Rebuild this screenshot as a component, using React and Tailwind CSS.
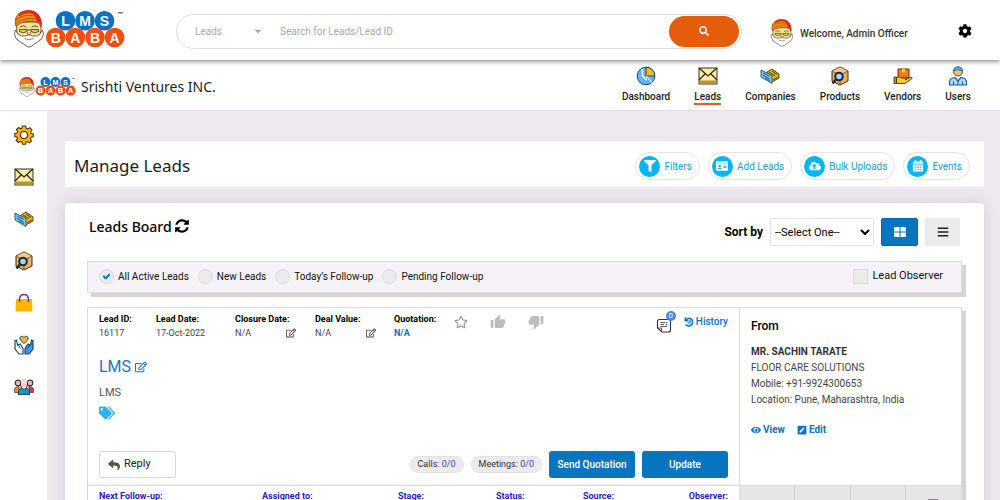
import React from "react";
import {
  FaSearch,
  FaCog,
  FaFilter,
  FaIdCard,
  FaCloudUploadAlt,
  FaRegEdit,
  FaTags,
  FaReply,
  FaEye,
  FaBars,
  FaCaretDown,
  FaRegStar,
  FaCheck,
  FaWhatsapp,
  FaSkype,
  FaPenSquare,
} from "react-icons/fa";
import { MdThumbUp, MdThumbDown } from "react-icons/md";

const BabaFace = ({ className }) => (
  <svg viewBox="0 0 30 38" className={className} aria-hidden="true">
    <path d="M3 12Q2 22 4 26L15 31L26 26Q28 20 26.500 12Z" fill="#f6e296" stroke="#3a3520" strokeWidth=".8" />
    <path d="M1.500 20Q-.5 24 1.500 27Q2 30 5 30.500Q6 33 9 33.500Q12 36.500 15 37.200Q18 36.500 21 33.500Q24 33 25 30.500Q28 30 28.500 27Q30.500 24 28.500 20Q27 24.500 22.500 26Q18.500 26.500 15 24.800Q11.500 26.500 7.500 26Q3 24.500 1.500 20Z" fill="#fff" stroke="#555" strokeWidth=".9" />
    <path d="M2 16.500C-.5 10 3 2 11 .8C20 -.8 28 4 27.500 16.500C24 11.500 20 11 15 11.500C10 12 6 12.500 2 16.500Z" fill="#f08c14" stroke="#7a2b08" strokeWidth=".7" />
    <path d="M12 .8C21 -.5 28 4 27.500 16C26 13 24.500 12 22.500 11.500C23 7 19 2.500 12 .8Z" fill="#e2221c" />
    <path d="M4.500 5Q8 1 13 1Q17 1.500 18.500 3.500Q11 2 5 6.500Z" fill="#d92a1a" />
    <path d="M2 10Q10 3.500 21 6M2 13.500Q11 6.500 22.500 9" stroke="#b9480a" strokeWidth=".8" fill="none" />
    <path d="M6 17Q9 14.800 12.500 17M17.500 17Q21 14.800 24 17" stroke="#4a4430" strokeWidth=".9" fill="none" />
    <path d="M5.500 19.500H13V21.500Q9 24 5.500 21.500ZM17 19.500H24.500V21.500Q21 24 17 21.500ZM13 20H17" fill="#e2c96a" stroke="#333" strokeWidth=".8" />
    <path d="M13.800 22Q12.500 24.500 15 24.800Q17.500 24.500 16.200 22" fill="#f6e296" stroke="#6f5a20" strokeWidth=".8" />
    <path d="M10.500 28.500Q15 31 19.500 28.500" stroke="#777" strokeWidth=".9" fill="none" />
  </svg>
);

const LogoWords = ({ className }) => (
  <svg viewBox="0 0 80 37" className={className} role="img" aria-label="LMS BABA">
    <g fontFamily="Liberation Sans, Arial, sans-serif" fontWeight="700" fontSize="14" fill="#fff" textAnchor="middle">
      {["L", "M", "S"].map((c, i) => (
        <g key={i}>
          <circle cx={19.500 + i * 19.500} cy="9.800" r="9.800" fill="#0a72c0" />
          <text x={19.500 + i * 19.500} y="14.800">{c}</text>
        </g>
      ))}
      {["B", "A", "B", "A"].map((c, i) => (
        <g key={i}>
          <circle cx={9.800 + i * 19.600} cy="26.500" r="9.800" fill="#f0500f" />
          <text x={9.800 + i * 19.600} y="31.500">{c}</text>
        </g>
      ))}
    </g>
    <text x="71" y="5" fontSize="6" fontWeight="700" fontFamily="Liberation Sans, Arial, sans-serif" fill="#222">™</text>
  </svg>
);

const PieIcon = () => (
  <svg viewBox="0 0 20 20" className="size-5">
    <circle cx="10" cy="10" r="8.800" fill="#62b5ef" stroke="#164b7c" />
    <path d="M10 10V1.200A8.800 8.800 0 0 1 18.800 10Z" fill="#ffb90f" stroke="#164b7c" />
    <path d="M10 10L16 16.500" stroke="#cfeafd" strokeWidth="1.200" />
    <path d="M6.500 3V10L10.500 14" stroke="#fff" strokeWidth="1.500" fill="none" />
  </svg>
);
const MailIcon = () => (
  <svg viewBox="0 0 20 20" className="size-5">
    <rect x="1" y="2" width="18" height="16" fill="#fdeb9d" stroke="#333" />
    <path d="M1.500 14.500H18.500V17.500H1.500Z" fill="#b9962a" />
    <path d="M1 2L10 10L19 2M1 14L7 8M19 14L13 8" fill="none" stroke="#222" strokeWidth="1.200" />
  </svg>
);
const CompaniesIcon = () => (
  <svg viewBox="0 0 20 20" className="size-5">
    <path d="M7 6L12 3L19 8V12L12 16L7 12Z" fill="#e8b81e" stroke="#4a3b10" strokeWidth=".9" />
    <path d="M9 6L15 10M12 5L17 8.500M13 14L18 11" stroke="#6b530f" strokeWidth="1.100" />
    <path d="M1 4L12 9.500V17.500L1 11Z" fill="#79c3ee" stroke="#24526e" strokeWidth=".9" />
    <path d="M3 7L9.500 10.300M3 9.300L9.500 12.800M5 12L10 14.700" stroke="#24526e" strokeWidth=".9" />
  </svg>
);
const BoxIcon = () => (
  <svg viewBox="0 0 20 20" className="size-5">
    <path d="M10 1L18 5V15L10 19L2 15V5Z" fill="#efb05f" stroke="#3b2a18" />
    <path d="M2 5L10 9L18 5M10 9V19" stroke="#7b5124" fill="none" />
    <path d="M10 1L18 5L10 9L2 5Z" fill="#f6c98b" stroke="#7b5124" strokeWidth=".6" />
    <circle cx="9" cy="10.500" r="3.800" fill="#a6d5ef" stroke="#15293f" strokeWidth="2" />
    <path d="M6 13.500L2.500 17.500" stroke="#15293f" strokeWidth="2.500" />
  </svg>
);
const VendorIcon = () => (
  <svg viewBox="0 0 20 20" className="size-5">
    <path d="M5 3H16V12H5Z" fill="#f27a1a" stroke="#6b2f08" />
    <path d="M9 3H12V6.500H9Z" fill="#ffcb45" />
    <path d="M1 11H3.500V17.500H1Z" fill="#c9920c" stroke="#3e3007" strokeWidth=".8" />
    <path d="M3.500 12Q6 9.500 9 12H13Q13.500 13 12 14L18 11Q20 11.500 18.500 13L12 17.500H3.500Z" fill="#ffc928" stroke="#3e3007" strokeWidth=".9" />
  </svg>
);
const UserIcon = () => (
  <svg viewBox="0 0 20 20" className="size-5">
    <circle cx="10" cy="5.500" r="4.500" fill="#ffc24a" stroke="#1c5f99" />
    <path d="M5.500 5Q6 .8 10 1Q14 .8 14.500 5Q10 2.500 5.500 5Z" fill="#5db0ea" stroke="#1c5f99" strokeWidth=".8" />
    <path d="M1.500 19V15.500Q2 12 7 11.500L10 15L13 11.500Q18 12 18.500 15.500V19Z" fill="#a9dafb" stroke="#1c5f99" strokeWidth="1.200" />
    <path d="M10 15V19M5.500 15.500V19M14.500 15.500V19" stroke="#1c5f99" />
  </svg>
);
const GearIcon = () => (
  <svg viewBox="0 0 20 20" className="size-5">
    <path d="M8.300 1H11.700L12.200 3.300L14 4L16 2.800L18 5L16.600 7L17.200 8.500L19.300 9V11.800L17 12.200L16.300 13.800L17.600 15.800L15.500 17.800L13.500 16.500L12 17L11.700 19.200H8.500L8 17L6.300 16.300L4.300 17.500L2.200 15.500L3.500 13.500L2.900 12L.8 11.600V8.500L3 8L3.700 6.500L2.400 4.500L4.600 2.500L6.500 3.800L7.900 3.200Z" fill="#ffb60a" stroke="#4b3708" strokeWidth="1.100" />
    <circle cx="10" cy="10" r="3.600" fill="#fff" stroke="#4b3708" strokeWidth="1.300" />
  </svg>
);
const BagIcon = () => (
  <svg viewBox="0 0 20 20" className="size-5">
    <path d="M2 6H18L18.500 17.500Q18.500 18.500 17.500 18.500H2.500Q1.500 18.500 1.500 17.500Z" fill="#ffb600" />
    <path d="M5.500 9V6Q6 1.500 10 1.500Q14 1.500 14.500 6V9" fill="none" stroke="#6a3b8f" strokeWidth="1.500" />
  </svg>
);
const CareIcon = () => (
  <svg viewBox="0 0 20 20" className="size-5">
    <path d="M10 8.500L6.300 5Q5 2.500 7 1.300Q9 .6 10 2.500Q11 .6 13 1.300Q15 2.500 13.700 5Z" fill="#ffb91c" stroke="#174a73" />
    <path d="M1 5.500L2.500 5L3.500 10L6 9L9 13.500V19H5L1 14Z" fill="#fff" stroke="#174a73" strokeWidth="1.200" />
    <path d="M19 5.500L17.500 5L16.500 10L14 9L11 13.500V19H15L19 14Z" fill="#3b9adf" stroke="#174a73" strokeWidth="1.200" />
    <path d="M4 10L6.500 13.500M16 10L13.500 13.500" stroke="#174a73" />
  </svg>
);
const TeamIcon = () => (
  <svg viewBox="0 0 20 20" className="size-5">
    <circle cx="4" cy="6" r="2.800" fill="#f3b7b0" stroke="#432e5d" strokeWidth="1.200" />
    <circle cx="16" cy="6" r="2.800" fill="#f3b7b0" stroke="#432e5d" strokeWidth="1.200" />
    <path d="M.5 15.500V12Q1 9.500 5 9.500V15.500Z" fill="#f48b20" stroke="#333460" strokeWidth=".7" />
    <path d="M19.500 15.500V12Q19 9.500 15 9.500V15.500Z" fill="#ee3150" stroke="#333460" strokeWidth=".7" />
    <path d="M4.500 17.500V14Q5 11 10 11Q15 11 15.500 14V17.500Z" fill="#149aac" stroke="#17475f" />
    <path d="M6.500 4Q10 1 13.500 4V8Q13 12 10 12.500Q7 12 6.500 8Z" fill="#fbd3c4" stroke="#333460" />
    <path d="M6.500 5Q10 6 13.500 5Q13 2 10 2Q7 2 6.500 5Z" fill="#e7eac8" />
  </svg>
);
const RefreshIcon = () => (
  <svg viewBox="0 0 1792 1792" className="size-4" fill="currentColor">
    <path d="M1639 1056q0 5-1 7-64 268-268 434.500t-478 166.500q-146 0-282.500-55t-243.500-157l-129 129q-19 19-45 19t-45-19-19-45v-448q0-26 19-45t45-19h448q26 0 45 19t19 45-19 45l-137 137q71 66 161 102t187 36q134 0 250-65t186-179q11-17 53-117 8-23 30-23h192q13 0 22.500 9.500t9.500 22.500zm25-800v448q0 26-19 45t-45 19h-448q-26 0-45-19t-19-45 19-45l138-138q-148-137-349-137-134 0-250 65t-186 179q-11 17-53 117-8 23-30 23h-199q-13 0-22.500-9.500t-9.500-22.500v-7q65-268 270-434.500t480-166.500q146 0 284 55.500t245 156.500l130-129q19-19 45-19t45 19 19 45z" />
  </svg>
);
const CalendarIcon = () => (
  <svg viewBox="0 0 14 14" className="size-3">
    <path d="M3 0H5V3H3ZM9 0H11V3H9Z" fill="#fff" />
    <path d="M1 2H13V13.500H1Z" fill="#fff" />
    <path d="M1 4.800H13M3 7H5M6 7H8M9 7H11M3 9H5M6 9H8M9 9H11M3 11.300H5M6 11.300H8M9 11.300H11" stroke="#04b5f4" strokeWidth="1" />
  </svg>
);
const TilesIcon = () => (
  <svg viewBox="0 0 12 10" className="h-[10px] w-3" fill="#fff">
    <rect width="5.500" height="4.500" rx=".6" />
    <rect x="6.500" width="5.500" height="4.500" rx=".6" />
    <rect y="5.500" width="5.500" height="4.500" rx=".6" />
    <rect x="6.500" y="5.500" width="5.500" height="4.500" rx=".6" />
  </svg>
);
const NotesIcon = () => (
  <svg viewBox="0 0 16 16" className="size-4" fill="none" stroke="#333">
    <path d="M3.500 2.500H12.500Q14.500 2.500 14.500 4.500V13Q14.500 15 12.500 15H6L1.500 11V4.500Q1.500 2.500 3.500 2.500Z" strokeWidth="1.100" />
    <path d="M2 11H5.500V14.500M4.500 5.500H9M4.500 7.500H8M4.500 9.500H11M9.500 7.500H11.500M10 5.500H11.500" strokeWidth=".8" />
  </svg>
);
const HistoryIcon = () => (
  <svg viewBox="0 0 10 10" className="size-2.5" fill="none" stroke="currentColor" strokeWidth="1.500">
    <path d="M1.500 7.500Q3 9.300 5.500 9A4 4 0 0 0 5.500 1.200Q3.500 1.200 2 3" />
    <path d="M1.300 .5V3.700H4.500" />
    <path d="M3.500 6H6V3" strokeWidth="1.200" />
  </svg>
);

const NAV = [
  ["Dashboard", PieIcon],
  ["Leads", MailIcon],
  ["Companies", CompaniesIcon],
  ["Products", BoxIcon],
  ["Vendors", VendorIcon],
  ["Users", UserIcon],
];
const SIDE = [
  ["Settings", GearIcon],
  ["Leads", MailIcon],
  ["Companies", CompaniesIcon],
  ["Products", BoxIcon],
  ["Orders", BagIcon],
  ["Support", CareIcon],
  ["Team", TeamIcon],
];
const ACTIONS = [
  ["Filters", <FaFilter className="size-3" />],
  ["Add Leads", <FaIdCard className="size-3" />],
  ["Bulk Uploads", <FaCloudUploadAlt className="size-3" />],
  ["Events", <CalendarIcon />],
];
const STATUSES = ["All Active Leads", "New Leads", "Today’s Follow-up", "Pending Follow-up"];

function Header() {
  return (
    <header className="relative z-10 flex h-15 shrink-0 items-center bg-white pt-0.5 pr-7 pl-3.5 shadow-[0_1px_5px_rgba(0,0,0,0.55)]">
      <a href="#home" className="flex w-[162px] shrink-0 items-center gap-0.5 pb-1" aria-label="LMS Baba home">
        <BabaFace className="h-[38px] w-[30px]" />
        <LogoWords className="h-[37px] w-[80px]" />
      </a>
      <form className="flex h-[35px] min-w-0 flex-1 items-center rounded-full border border-[#dedede] pr-0.5 pl-[18px]" onSubmit={(e) => e.preventDefault()}>
        <button type="button" className="flex w-[68px] items-center justify-between text-[10px] text-[#a9a9a9]">
          Leads
          <FaCaretDown className="size-2.5" />
        </button>
        <input aria-label="Search leads" placeholder="Search for Leads/Lead ID" className="ml-[17px] min-w-0 flex-1 text-[10px] outline-none placeholder:text-[#a9a9a9]" />
        <button aria-label="Search" className="flex h-[31px] w-[70px] items-center justify-center rounded-full bg-[#e55d0b] text-white">
          <FaSearch className="size-2.5" />
        </button>
      </form>
      <div className="ml-7 flex w-[158px] items-center gap-1.5 pt-1">
        <BabaFace className="h-[28px] w-6" />
        <span className="text-[10px] font-medium whitespace-nowrap text-[#333]">Welcome, Admin Officer</span>
      </div>
      <button aria-label="Settings" className="ml-[30px] text-black">
        <FaCog className="size-3.5" />
      </button>
    </header>
  );
}

function SubHeader() {
  return (
    <div className="flex h-[51px] shrink-0 items-center justify-between border-b border-[#e4e2e4] bg-white pr-[29px] pl-[19px]">
      <div className="flex items-center pt-[3px]">
        <BabaFace className="h-5 w-4" />
        <LogoWords className="h-[19px] w-[42px]" />
        <span className="ml-1 font-['Noto_Sans',sans-serif] text-[14px] text-[#222]">Srishti Ventures INC.</span>
      </div>
      <nav className="flex gap-6">
        {NAV.map(([label, Icon]) => (
          <a key={label} href={"#" + label.toLowerCase()} className="flex flex-col items-center gap-1 text-[10px] leading-[13px] font-medium text-[#222]">
            <Icon />
            <span className={label === "Leads" ? "border-b-2 border-[#e0602c]" : "border-b-2 border-transparent"}>{label}</span>
          </a>
        ))}
      </nav>
    </div>
  );
}

function Detail({ label, value, editable, className }) {
  return (
    <div className={className}>
      <div className="font-bold text-black">{label}</div>
      <div className="flex items-center justify-between">
        <span>{value}</span>
        {editable && (
          <button aria-label={"Edit " + label}>
            <FaRegEdit className="size-2.5" />
          </button>
        )}
      </div>
    </div>
  );
}

function LeadCard() {
  return (
    <article className="mt-[10px] flex border border-[#dcdcdc] bg-white shadow-[4px_4px_0_#d5d5d5]">
      <div className="min-w-0 flex-1">
        <div className="flex h-[177px] flex-col px-[11px] pt-1 pb-[7px]">
          <div className="flex h-7 text-[9px] leading-[14px] text-[#444]">
            <Detail label="Lead ID:" value="16117" className="w-[57px]" />
            <Detail label="Lead Date:" value="17-Oct-2022" className="w-[79px]" />
            <Detail label="Closure Date:" value="N/A" editable className="mr-[19px] w-[61px]" />
            <Detail label="Deal Value:" value="N/A" editable className="mr-[18px] w-[61px]" />
            <div className="w-[60px] font-bold">
              <div className="text-black">Quotation:</div>
              <div className="text-[#0675bd]">N/A</div>
            </div>
            <div className="flex h-5 items-center gap-[22px] text-[#bdbdbd]">
              <button aria-label="Star"><FaRegStar className="size-3.5 text-[#999]" /></button>
              <button aria-label="Like"><MdThumbUp className="size-4" /></button>
              <button aria-label="Dislike"><MdThumbDown className="size-4" /></button>
            </div>
            <div className="ml-auto flex h-5 items-center gap-3">
              <button aria-label="Notes" className="relative mt-1.5">
                <NotesIcon />
                <span className="absolute -top-1.5 -right-1 flex size-[10px] items-center justify-center rounded-full bg-[#4e86dc] text-[8px] text-white">0</span>
              </button>
              <button className="flex items-center gap-0.5 text-[10px] font-medium text-[#0675bd]">
                <HistoryIcon />
                History
              </button>
            </div>
          </div>
          <h3 className="mt-4 flex items-center gap-1 text-[16px] leading-[22px] text-[#1c74bd]">
            LMS
            <button aria-label="Edit title"><FaRegEdit className="size-3" /></button>
          </h3>
          <p className="mt-[7px] text-[11px] leading-4 text-[#555]">LMS</p>
          <button aria-label="Tags" className="mt-1 self-start text-[#2db3ec]"><FaTags className="size-4" /></button>
          <div className="mt-auto flex items-center">
            <button className="flex h-[27px] w-[77px] items-center gap-1 rounded-[3px] border border-[#d8d8d8] pl-2 text-[11px] text-[#222]">
              <FaReply className="size-3 text-[#555]" />
              Reply
            </button>
            <div className="ml-auto flex items-center gap-[7px]">
              <span className="rounded-full border border-[#e2e2e2] bg-[#ebebeb] px-[7px] text-[9px] leading-[15px] text-[#333]">Calls: <span className="text-[#4d3fc0]">0/0</span></span>
              <span className="rounded-full border border-[#e2e2e2] bg-[#ebebeb] px-[7px] text-[9px] leading-[15px] text-[#333]">Meetings: <span className="text-[#4d3fc0]">0/0</span></span>
              <button className="h-[27px] w-[86px] rounded-[3px] bg-[#0675bf] text-[10px] font-medium text-white">Send Quotation</button>
              <button className="h-[27px] w-[86px] rounded-[3px] bg-[#0675bf] text-[10px] font-medium text-white">Update</button>
            </div>
          </div>
        </div>
        <div className="flex h-12 justify-between border-t border-[#dedede] px-[11px] pt-[3px] text-[9px] leading-[14px] font-bold text-[#2b23bd] shadow-[0_-1px_2px_rgba(0,0,0,0.08)]">
          <span className="w-[163px]">Next Follow-up:</span>
          <span className="w-[136px]">Assigned to:</span>
          <span className="w-[98px]">Stage:</span>
          <span className="w-[87px]">Status:</span>
          <span>Source:</span>
          <span className="ml-auto">Observer:</span>
        </div>
      </div>
      <aside className="flex w-[222px] shrink-0 flex-col border-l border-[#dcdcdc] text-[10px]">
        <div className="h-[177px] px-[11px] pt-3">
          <h4 className="text-[12px] leading-[13px] font-medium text-black">From</h4>
          <div className="mt-[11px] leading-4 text-[#444]">
            <div className="font-bold text-[#333]">MR. SACHIN TARATE</div>
            <div>FLOOR CARE SOLUTIONS</div>
            <div>Mobile: +91-9924300653</div>
            <div>Location: Pune, Maharashtra, India</div>
          </div>
          <div className="mt-3.5 flex gap-3 leading-4 font-bold text-[#0675bd]">
            <a href="#view" className="flex items-center gap-0.5"><FaEye className="size-2.5" />View</a>
            <a href="#edit" className="flex items-center gap-0.5"><FaPenSquare className="size-2.5" />Edit</a>
          </div>
        </div>
        <div className="grid flex-1 grid-cols-4 divide-x divide-[#d2d2d2] border-t border-[#dcdcdc] bg-[#e6e6e6]">
          <button aria-label="Skype" className="flex justify-center pt-[13px] text-[#3fa9e0]"><FaSkype className="size-4" /></button>
          <button aria-label="WhatsApp" className="flex justify-center pt-[13px] text-[#4cb55a]"><FaWhatsapp className="size-4" /></button>
          <button aria-label="Call" />
          <button aria-label="Email" className="flex justify-center pt-[13px]"><span className="h-3 w-2.5 bg-[#3fa0cf]" /></button>
        </div>
      </aside>
    </article>
  );
}

export default function App() {
  return (
    <div className="flex h-screen flex-col overflow-hidden bg-[#eee9ef] font-[Roboto,sans-serif]">
      <Header />
      <SubHeader />
      <div className="flex min-h-0 flex-1">
        <nav aria-label="Sections" className="flex w-[47px] shrink-0 flex-col items-center gap-[22px] bg-white pt-3.5">
          {SIDE.map(([label, Icon]) => (
            <a key={label} href={"#" + label.toLowerCase()} aria-label={label}><Icon /></a>
          ))}
        </nav>
        <main className="min-w-0 flex-1 overflow-hidden pt-[30px] pr-4 pl-[18px]">
          <div className="flex h-[46px] items-center justify-between bg-white pt-1 pr-3.5 pl-[9px]">
            <h1 className="font-['Noto_Sans',sans-serif] text-[17px] text-[#1c1c1c]">Manage Leads</h1>
            <div className="flex gap-2">
              {ACTIONS.map(([label, icon]) => (
                <button key={label} className="flex h-7 items-center gap-1 rounded-full border border-[#e2e4e8] pr-[7px] pl-[3px] text-[10px] text-[#1d9fc0]">
                  <span className="flex size-[21px] items-center justify-center rounded-full bg-[#04b5f4] text-white">{icon}</span>
                  {label}
                </button>
              ))}
            </div>
          </div>
          <section className="mt-4 rounded-t bg-white pt-3.5 pr-[22px] pb-10 pl-[22px] shadow-[0_0_16px_rgba(90,60,100,0.18)]">
            <div className="flex h-[30px] items-center">
              <h2 className="flex flex-1 items-center gap-0.5 pb-3 pl-0.5 font-['Noto_Sans',sans-serif] text-[14px] font-medium text-black">
                Leads Board
                <button aria-label="Refresh"><RefreshIcon /></button>
              </h2>
              <label htmlFor="sort" className="mr-[7px] text-[12px] font-bold text-black">Sort by</label>
              <select id="sort" className="h-7 w-[104px] border border-[#e4e4e4] bg-white text-[11px] text-black">
                <option>--Select One--</option>
              </select>
              <button aria-label="Grid view" className="ml-[7px] flex h-7 w-[37px] items-center justify-center rounded-[2px] border border-[#0a67a6] bg-[#0675bf]"><TilesIcon /></button>
              <button aria-label="List view" className="mr-0.5 ml-[7px] flex h-7 w-[35px] items-center justify-center bg-[#ebebeb] text-[#222]"><FaBars className="size-3" /></button>
            </div>
            <div className="mt-3.5 flex h-8 items-center border border-[#dcdcdc] bg-[#f6f3f8] pr-[18px] pb-0.5 pl-[11px] text-[#111] shadow-[4px_4px_0_#d5d5d5]">
              <fieldset className="flex flex-1 gap-[9px] text-[10px]">
                {STATUSES.map((s, i) => (
                  <label key={s} className="flex items-center gap-1">
                    <span className="relative flex size-[15px]">
                      <input type="radio" name="status" defaultChecked={i === 0} className="peer size-[15px] appearance-none rounded-full border border-[#dbdbdb] bg-[#ebebeb]" />
                      <FaCheck className="pointer-events-none absolute top-1 left-1 hidden size-[7px] stroke-[#0675bd] stroke-[60px] text-[#0675bf] peer-checked:block" />
                    </span>
                    {s}
                  </label>
                ))}
              </fieldset>
              <label className="flex items-center gap-1 text-[11px]">
                <input type="checkbox" className="size-[15px] appearance-none border border-[#dbdbdb] bg-[#ebebeb]" />
                Lead Observer
              </label>
            </div>
            <div className="pt-1">
              <LeadCard />
            </div>
          </section>
        </main>
      </div>
    </div>
  );
}
